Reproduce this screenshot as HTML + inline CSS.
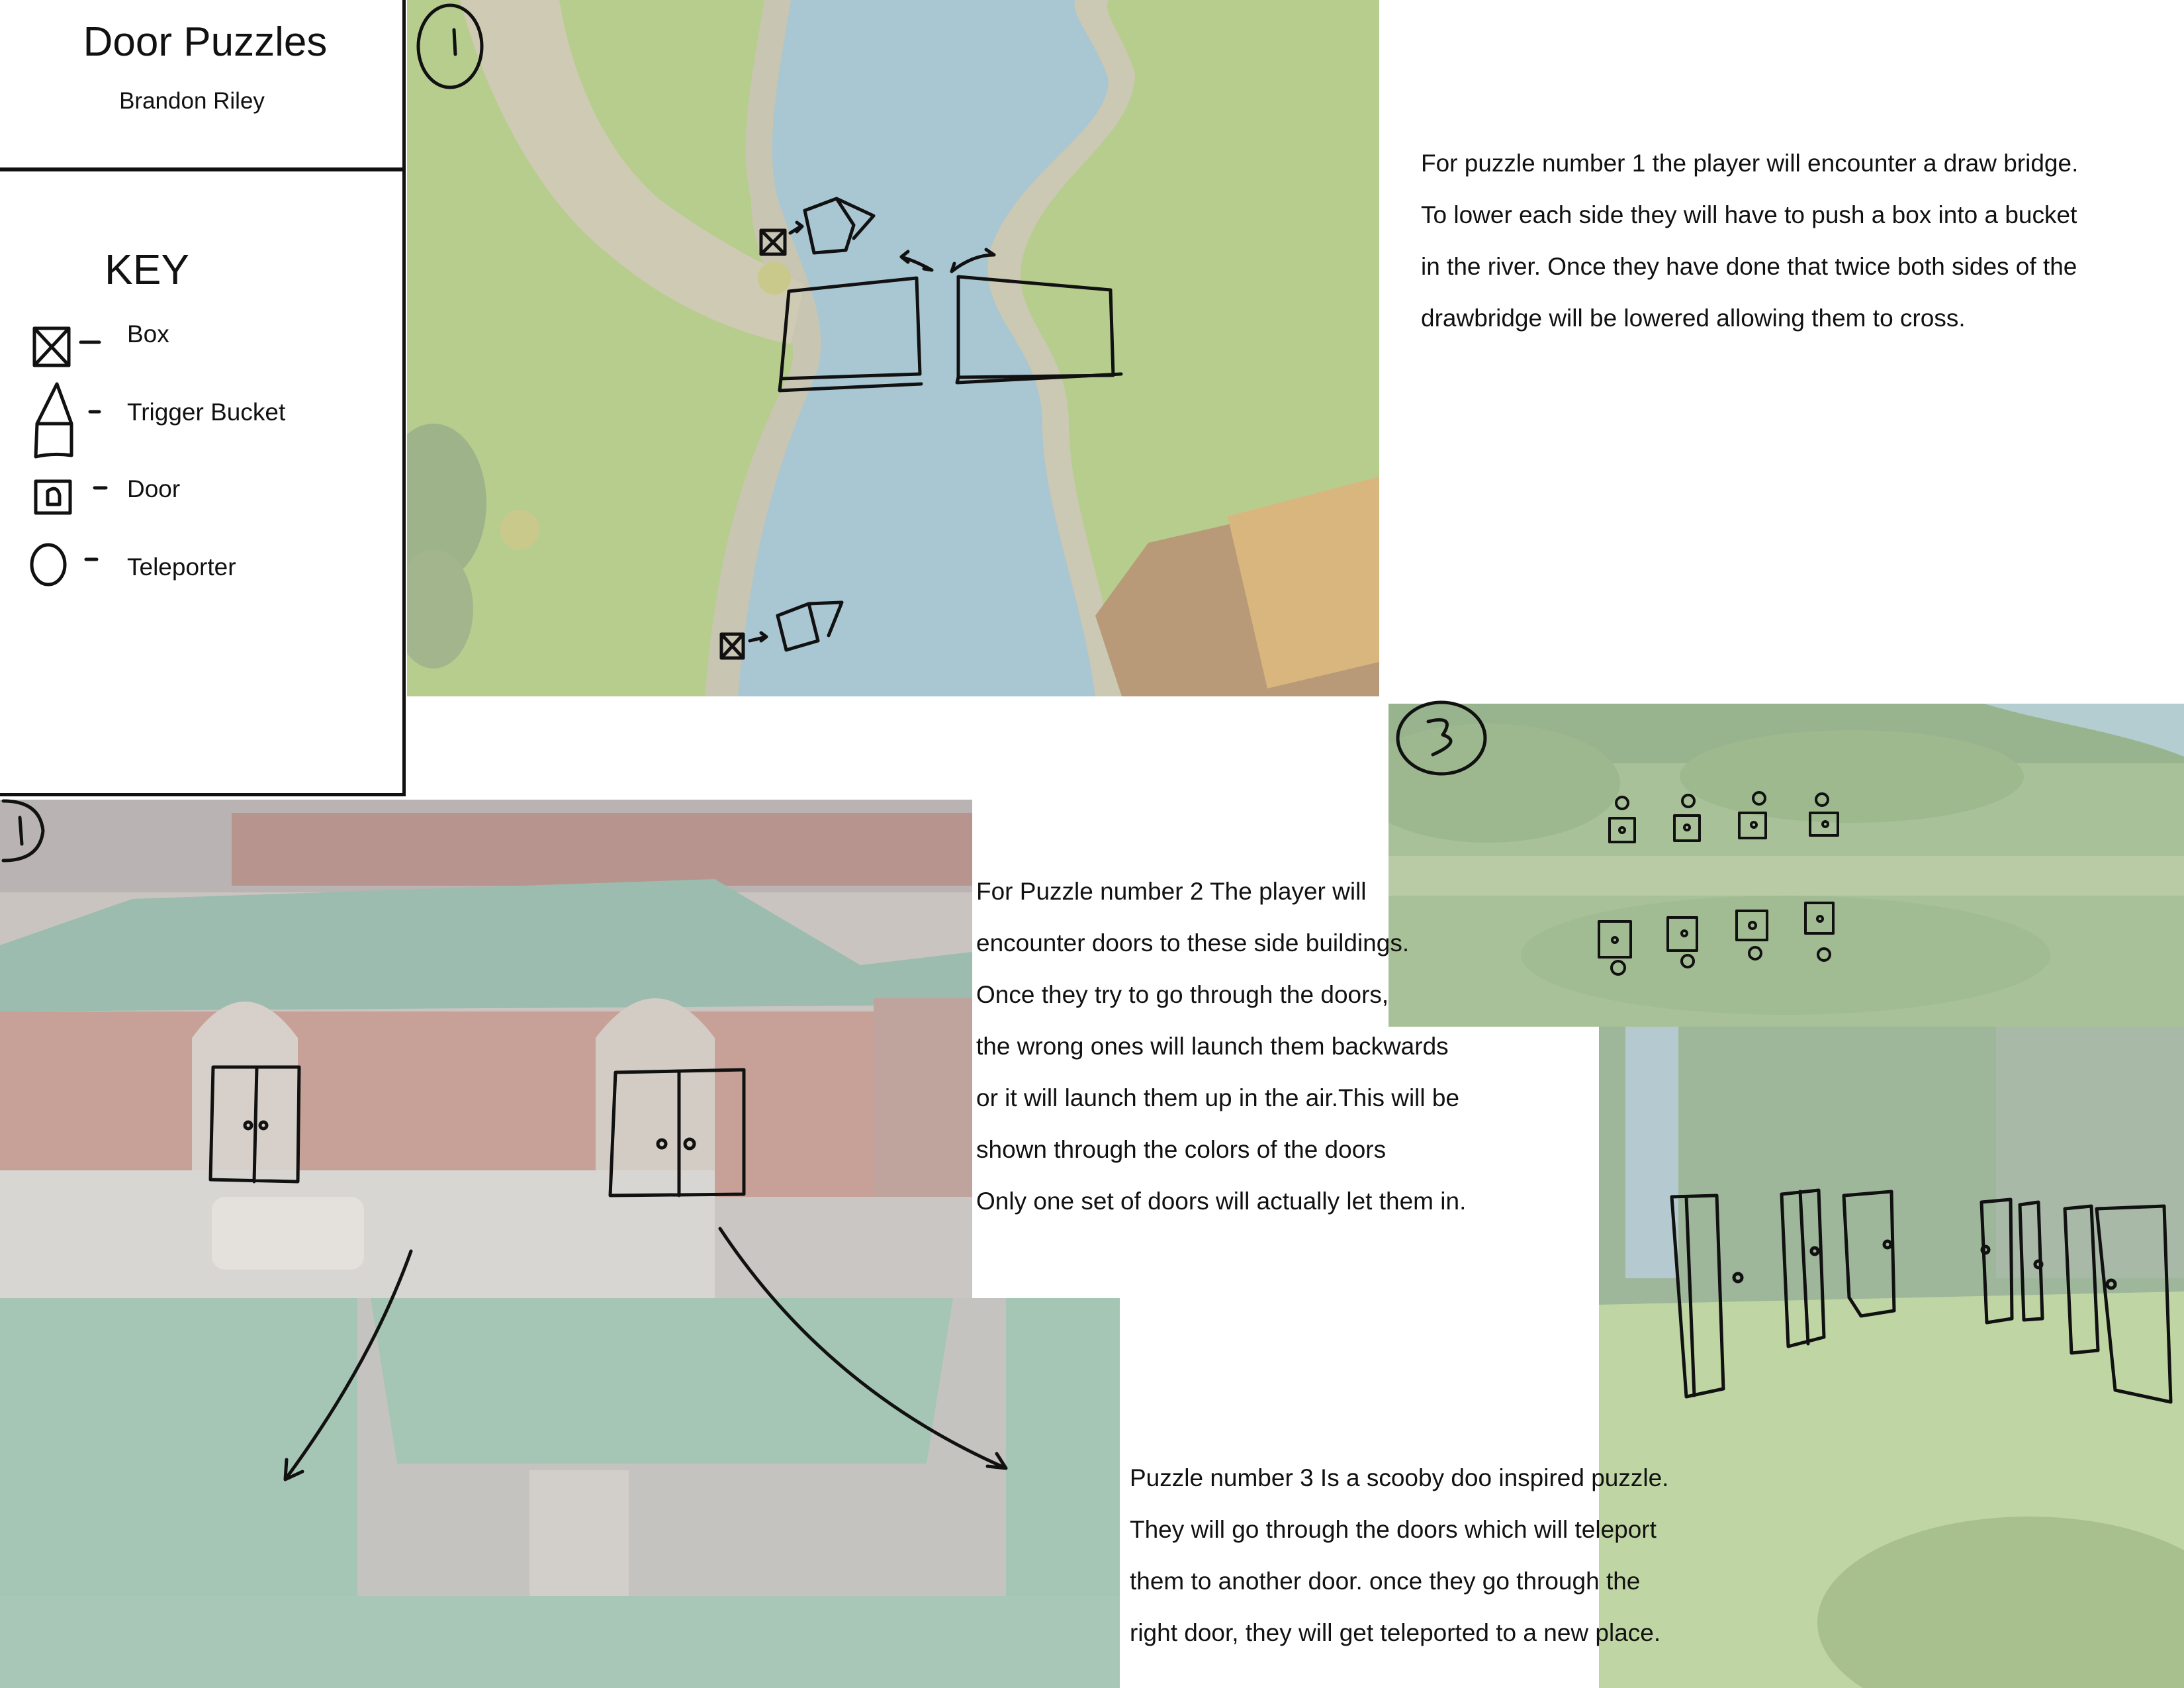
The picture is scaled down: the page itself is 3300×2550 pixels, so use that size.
<!DOCTYPE html>
<html><head><meta charset="utf-8">
<style>
html,body{margin:0;padding:0;}
body{width:3300px;height:2550px;position:relative;overflow:hidden;background:#fff;font-family:"Liberation Sans",sans-serif;color:#111;}
.abs{position:absolute;}
.txt{position:absolute;font-size:37px;line-height:78px;white-space:nowrap;}
</style></head><body>

<!-- map 1 -->
<svg class="abs" style="left:615px;top:0" width="1469" height="1052" viewBox="0 0 1469 1052">
<rect width="1469" height="1052" fill="#b7cd8e"/>
<path d="M580 0 C560 120 540 220 560 300 C600 420 640 480 620 560 C560 700 520 820 500 1052 L1040 1052 C1020 900 960 760 960 640 C960 520 860 480 880 380 C920 260 1060 200 1060 120 C1040 60 1000 20 1010 0 Z" fill="#a9c6d3"/>
<path d="M580 0 C560 120 540 220 560 300 C600 420 640 480 620 560 C560 700 520 820 500 1052 L450 1052 C470 820 510 700 580 560 C600 480 520 420 520 300 C500 220 520 120 540 0Z" fill="#c9c5b3"/>
<path d="M1010 0 C1000 20 1040 60 1060 120 C1060 200 920 260 880 380 C860 480 960 520 960 640 C960 760 1020 900 1040 1052 L1080 1052 C1060 900 1000 760 1000 640 C1000 520 910 480 930 390 C960 270 1100 210 1100 110 C1080 50 1050 20 1060 0Z" fill="#cbc8b4"/>
<path d="M80 0 L230 0 C250 120 300 230 380 300 C460 360 540 400 600 430 L580 520 C480 500 380 450 300 380 C200 300 120 150 80 0Z" fill="#cfcab3"/>
<path d="M1120 820 L1469 740 L1469 1052 L1080 1052 L1040 930Z" fill="#b89a78"/>
<path d="M1240 780 L1469 720 L1469 1000 L1300 1040 Z" fill="#d9b67e"/>
<ellipse cx="40" cy="760" rx="80" ry="120" fill="#9fb38a"/>
<ellipse cx="40" cy="920" rx="60" ry="90" fill="#a3b58d"/>
<ellipse cx="170" cy="800" rx="30" ry="30" fill="#c8c98a"/>
<ellipse cx="555" cy="420" rx="25" ry="25" fill="#c9c98b"/>
</svg>

<!-- map 3 -->
<svg class="abs" style="left:2098px;top:1063px" width="1202" height="488" viewBox="0 0 1202 488">
<rect width="1202" height="488" fill="#a9c198"/>
<rect y="0" width="1202" height="90" fill="#98b48e"/>
<path d="M900 0 L1202 0 L1202 80 C1100 40 1000 30 900 0Z" fill="#b3cdd0"/>
<ellipse cx="150" cy="120" rx="200" ry="90" fill="#9db88f"/>
<ellipse cx="700" cy="110" rx="260" ry="70" fill="#9fb98f"/>
<ellipse cx="600" cy="380" rx="400" ry="90" fill="#a1bb93"/>
<rect y="230" width="1202" height="60" fill="#b8cba5"/>
</svg>

<!-- building image -->
<svg class="abs" style="left:0;top:1208px" width="1469" height="753" viewBox="0 0 1469 753">
<rect width="1469" height="753" fill="#c9c4c0"/>
<rect width="1469" height="140" fill="#b9b3b3"/>
<rect x="350" y="20" width="1119" height="110" fill="#b7958e"/>
<path d="M0 220 L200 150 L1080 120 L1300 250 L1469 230 L1469 310 L0 320Z" fill="#9bbcae"/>
<rect x="0" y="320" width="1320" height="420" fill="#c7a197"/>
<rect x="1320" y="300" width="149" height="453" fill="#bfa49e"/>
<path d="M290 360 Q370 250 450 360 L450 560 L290 560Z" fill="#d7cfc9"/>
<path d="M900 360 Q990 240 1080 360 L1080 600 L900 600Z" fill="#d3ccc4"/>
<rect x="0" y="560" width="1080" height="193" fill="#d8d6d3"/>
<rect x="1080" y="600" width="389" height="153" fill="#c9c6c3"/>
<rect x="320" y="600" width="230" height="110" rx="20" fill="#e4e1dd"/>
</svg>

<!-- roof image -->
<svg class="abs" style="left:0;top:1961px" width="1692" height="589" viewBox="0 0 1692 589">
<rect width="1692" height="589" fill="#c5c3bf"/>
<rect width="540" height="589" fill="#a6c6b5"/>
<rect x="1520" width="172" height="589" fill="#a6c6b5"/>
<path d="M560 0 L1440 0 L1400 250 L600 250Z" fill="#a5c6b4"/>
<rect x="0" y="450" width="1692" height="139" fill="#a9c7b6"/>
<rect x="800" y="260" width="150" height="190" fill="#d2cfcb"/>
</svg>

<!-- forest image -->
<svg class="abs" style="left:2416px;top:1551px" width="884" height="999" viewBox="0 0 884 999">
<rect width="884" height="999" fill="#b5cc9f"/>
<rect width="884" height="420" fill="#9eb79a"/>
<rect x="40" y="0" width="80" height="380" fill="#b5cad0"/>
<rect x="600" y="0" width="284" height="380" fill="#a8b9a8"/>
<path d="M0 420 L884 400 L884 999 L0 999Z" fill="#c0d5a4"/>
<ellipse cx="650" cy="900" rx="320" ry="160" fill="#a8c08e"/>
</svg>

<!-- title box -->
<div class="abs" style="left:0;top:253px;width:612px;height:6px;background:#111"></div>
<div class="abs" style="left:608px;top:0;width:5px;height:1203px;background:#111"></div>
<div class="abs" style="left:0;top:1198px;width:612px;height:5px;background:#111"></div>
<div class="abs" style="left:0;top:28px;width:620px;text-align:center;font-size:62px;">Door Puzzles</div>
<div class="abs" style="left:0;top:133px;width:580px;text-align:center;font-size:35px;">Brandon Riley</div>
<div class="abs" style="left:158px;top:370px;font-size:64px;">KEY</div>
<div class="txt" style="left:192px;top:466px">Box</div>
<div class="txt" style="left:192px;top:584px">Trigger Bucket</div>
<div class="txt" style="left:192px;top:700px">Door</div>
<div class="txt" style="left:192px;top:818px">Teleporter</div>

<div class="txt" style="left:2147px;top:208px">For puzzle number 1 the player will encounter a draw bridge.</div>
<div class="txt" style="left:2147px;top:286px">To lower each side they will have to push a box into a bucket</div>
<div class="txt" style="left:2147px;top:364px">in the river. Once they have done that twice both sides of the</div>
<div class="txt" style="left:2147px;top:442px">drawbridge will be lowered allowing them to cross.</div>

<div class="txt" style="left:1475px;top:1308px">For Puzzle number 2 The player will</div>
<div class="txt" style="left:1475px;top:1386px">encounter doors to these side buildings.</div>
<div class="txt" style="left:1475px;top:1464px">Once they try to go through the doors,</div>
<div class="txt" style="left:1475px;top:1542px">the wrong ones will launch them backwards</div>
<div class="txt" style="left:1475px;top:1620px">or it will launch them up in the air.This will be</div>
<div class="txt" style="left:1475px;top:1698px">shown through the colors of the doors</div>
<div class="txt" style="left:1475px;top:1776px">Only one set of doors will actually let them in.</div>

<div class="txt" style="left:1707px;top:2194px">Puzzle number 3 Is a scooby doo inspired puzzle.</div>
<div class="txt" style="left:1707px;top:2272px">They will go through the doors which will teleport</div>
<div class="txt" style="left:1707px;top:2350px">them to another door. once they go through the</div>
<div class="txt" style="left:1707px;top:2428px">right door, they will get teleported to a new place.</div>

<!-- sketches -->
<svg class="abs" style="left:0;top:0" width="3300" height="2550" viewBox="0 0 3300 2550" fill="none" stroke="#111" stroke-width="5" stroke-linecap="round" stroke-linejoin="round">
<rect x="52" y="496" width="52" height="56"/><path d="M52 496 L104 552 M104 496 L52 552"/><path d="M122 517 L150 517"/>
<path d="M56 640 L86 580 L108 640 L108 688 Q80 684 54 690 Z M56 640 L108 640"/><path d="M136 622 L150 622"/>
<rect x="54" y="727" width="52" height="48"/><path d="M72 762 L72 742 Q86 732 90 748 L90 762 Z"/><path d="M143 737 L160 737"/>
<ellipse cx="73" cy="853" rx="25" ry="30"/><path d="M130 845 L146 845"/>
<ellipse cx="680" cy="70" rx="48" ry="62"/><path d="M686 45 L688 82"/>
<rect x="1150" y="348" width="36" height="36"/><path d="M1150 348 L1186 384 M1186 348 L1150 384"/>
<path d="M1194 352 L1210 342 M1204 336 L1212 342 L1204 350"/>
<path d="M1216 318 L1264 300 L1290 340 L1278 378 L1230 382 Z M1264 300 L1320 326 L1290 360"/>
<path d="M1362 388 Q1385 395 1408 408 M1362 388 l10 -8 M1362 388 l10 8 M1408 408 l-12 -2"/>
<path d="M1438 410 Q1470 385 1502 385 M1502 385 l-12 -8 M1438 410 l4 -12"/>
<path d="M1192 440 L1385 420 L1390 565 L1180 572 Z M1180 572 L1178 590 L1392 580"/>
<path d="M1448 418 L1678 438 L1682 567 L1448 570 Z M1448 570 L1446 578 L1694 565"/>
<rect x="1090" y="958" width="33" height="36"/><path d="M1090 958 L1123 994 M1123 958 L1090 994"/>
<path d="M1133 968 L1158 962 M1150 956 L1158 962 L1150 968"/>
<path d="M1175 930 L1222 912 L1236 968 L1188 982 Z M1222 912 L1272 910 L1252 960"/>
<ellipse cx="2178" cy="1115" rx="66" ry="54"/><path d="M2158 1090 Q2200 1080 2180 1110 Q2210 1120 2165 1140"/>
<g stroke-width="4">
<rect x="2432" y="1236" width="38" height="36"/><circle cx="2451" cy="1213" r="9"/><circle cx="2451" cy="1254" r="4"/>
<rect x="2530" y="1232" width="38" height="38"/><circle cx="2551" cy="1210" r="9"/><circle cx="2549" cy="1250" r="4"/>
<rect x="2628" y="1228" width="40" height="38"/><circle cx="2658" cy="1206" r="9"/><circle cx="2650" cy="1246" r="4"/>
<rect x="2735" y="1228" width="42" height="34"/><circle cx="2753" cy="1208" r="9"/><circle cx="2758" cy="1245" r="4"/>
<rect x="2416" y="1392" width="48" height="54"/><circle cx="2445" cy="1462" r="10"/><circle cx="2440" cy="1420" r="4"/>
<rect x="2520" y="1386" width="44" height="50"/><circle cx="2550" cy="1452" r="9"/><circle cx="2545" cy="1410" r="4"/>
<rect x="2624" y="1376" width="46" height="44"/><circle cx="2652" cy="1440" r="9"/><circle cx="2648" cy="1398" r="5"/>
<rect x="2728" y="1364" width="42" height="46"/><circle cx="2756" cy="1442" r="9"/><circle cx="2750" cy="1388" r="4"/>
</g>
<path d="M5 1210 Q60 1210 65 1255 Q60 1300 5 1300"/><path d="M30 1235 L33 1275"/>
<path d="M322 1612 L452 1612 L450 1785 L318 1782 Z M388 1612 L384 1785"/><circle cx="375" cy="1700" r="5"/><circle cx="398" cy="1700" r="5"/>
<path d="M930 1620 L1124 1616 L1124 1804 L922 1806 Z M1026 1618 L1026 1806"/><circle cx="1000" cy="1728" r="6"/><circle cx="1042" cy="1728" r="7"/>
<path d="M621 1890 Q560 2060 431 2235 M431 2235 l2 -30 M431 2235 l26 -12"/>
<path d="M1088 1856 Q1250 2100 1520 2218 M1520 2218 l-28 -3 M1520 2218 l-14 -22"/>
<path d="M2526 1808 L2594 1806 L2604 2098 L2548 2110 Z M2548 1808 L2560 2108"/><circle cx="2626" cy="1930" r="6"/>
<path d="M2692 1804 L2748 1798 L2756 2020 L2702 2034 Z M2720 1800 L2732 2030"/><circle cx="2742" cy="1890" r="5"/>
<path d="M2786 1806 L2858 1800 L2862 1980 L2812 1988 L2794 1960 Z"/><circle cx="2852" cy="1880" r="5"/>
<path d="M2994 1816 L3038 1812 L3040 1992 L3002 1998 Z"/><circle cx="3000" cy="1888" r="5"/>
<path d="M3052 1820 L3080 1816 L3086 1992 L3058 1994 Z"/><circle cx="3080" cy="1910" r="5"/>
<path d="M3120 1826 L3160 1822 L3170 2040 L3130 2044 Z"/>
<path d="M3168 1826 L3270 1822 L3280 2118 L3196 2100 Z"/><circle cx="3190" cy="1940" r="6"/>
</svg>
</body></html>
